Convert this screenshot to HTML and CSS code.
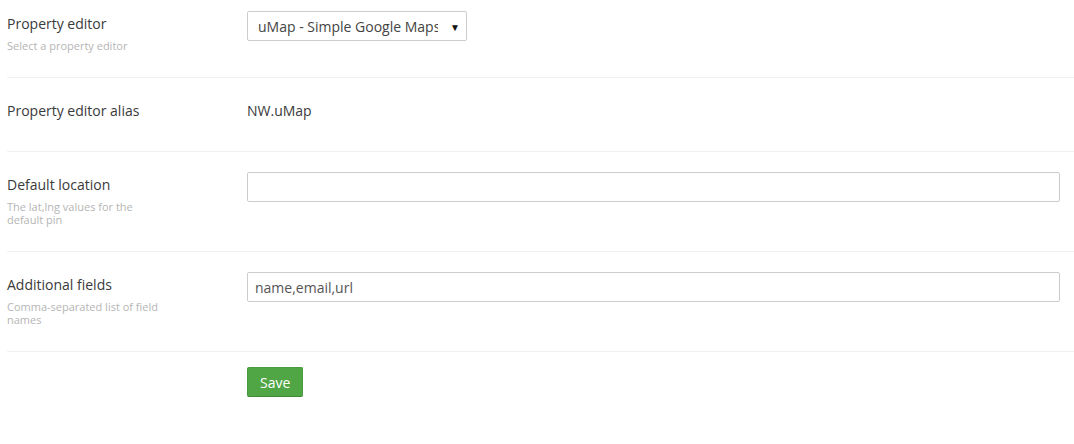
FILE: index.html
```html
<!DOCTYPE html>
<html lang="en">
<head>
    <meta charset="UTF-8">
    <meta name="viewport" content="width=device-width, initial-scale=1.0">
    <title>Data type: uMap</title>
    <link rel="stylesheet" href="styles.css">
</head>
<body>
    <form class="editor-form">
        <div class="control-group first">
            <div class="control-label">
                <label for="editor">Property editor</label>
                <small>Select a property editor</small>
            </div>
            <div class="controls">
                <div class="select-wrap">
                    <select id="editor">
                        <option>uMap - Simple Google Maps</option>
                    </select>
                    <span class="caret">&#9660;</span>
                </div>
            </div>
        </div>

        <div class="control-group">
            <div class="control-label">
                <label>Property editor alias</label>
            </div>
            <div class="controls">
                <div class="readonly">NW.uMap</div>
            </div>
        </div>

        <div class="control-group">
            <div class="control-label">
                <label for="location">Default location</label>
                <small>The lat,lng values for the default pin</small>
            </div>
            <div class="controls">
                <input type="text" id="location" class="text-input">
            </div>
        </div>

        <div class="control-group">
            <div class="control-label">
                <label for="fields">Additional fields</label>
                <small>Comma-separated list of field names</small>
            </div>
            <div class="controls">
                <input type="text" id="fields" class="text-input" value="name,email,url">
            </div>
        </div>

        <div class="form-actions">
            <button type="submit" class="btn-success">Save</button>
        </div>
    </form>
</body>
</html>
```

FILE: styles.css
```css
body {
    margin: 0;
    padding: 0 0 0 7px;
    font-family: "Open Sans", Arial, sans-serif;
    font-size: 14px;
    line-height: 20px;
    color: #3a3a3a;
    background-color: #fff;
}
.control-group {
    display: flex;
    padding: 20px 0 21px;
    border-bottom: 1px solid #f2f2f2;
}
.control-group.first {
    padding-top: 11px;
}
.control-label {
    width: 160px;
    flex-shrink: 0;
    margin-right: 80px;
    padding: 3px 0 9px;
}
.control-label label {
    display: block;
}
.control-label small {
    display: block;
    margin: 5px 0 -5px;
    font-size: 11px;
    line-height: 13px;
    color: #b5b5b5;
}
.controls {
    flex: 1;
    padding-right: 14px;
}
.readonly {
    padding-top: 3px;
}
.select-wrap {
    position: relative;
    width: 220px;
}
.select-wrap select {
    -webkit-appearance: none;
    appearance: none;
    display: block;
    width: 220px;
    height: 30px;
    padding: 0 28px 0 10px;
    font-family: inherit;
    font-size: 14px;
    color: #444;
    background-color: #fff;
    border: 1px solid #ccc;
    border-radius: 2px;
}
.select-wrap .caret {
    position: absolute;
    top: 6px;
    right: 7px;
    font-size: 10px;
    color: #111;
    pointer-events: none;
}
.text-input {
    display: block;
    box-sizing: border-box;
    width: 100%;
    height: 30px;
    padding: 4px 7px;
    font-family: inherit;
    font-size: 14px;
    color: #555;
    border: 1px solid #ccc;
    border-radius: 2px;
}
.form-actions {
    padding: 15px 0 0 240px;
}
.btn-success {
    height: 30px;
    padding: 0 12px;
    font-family: inherit;
    font-size: 14px;
    color: #fff;
    background-color: #50a545;
    border: 1px solid #4a9a3f;
    border-bottom-color: #3e8a34;
    border-radius: 2px;
    cursor: pointer;
}
```
